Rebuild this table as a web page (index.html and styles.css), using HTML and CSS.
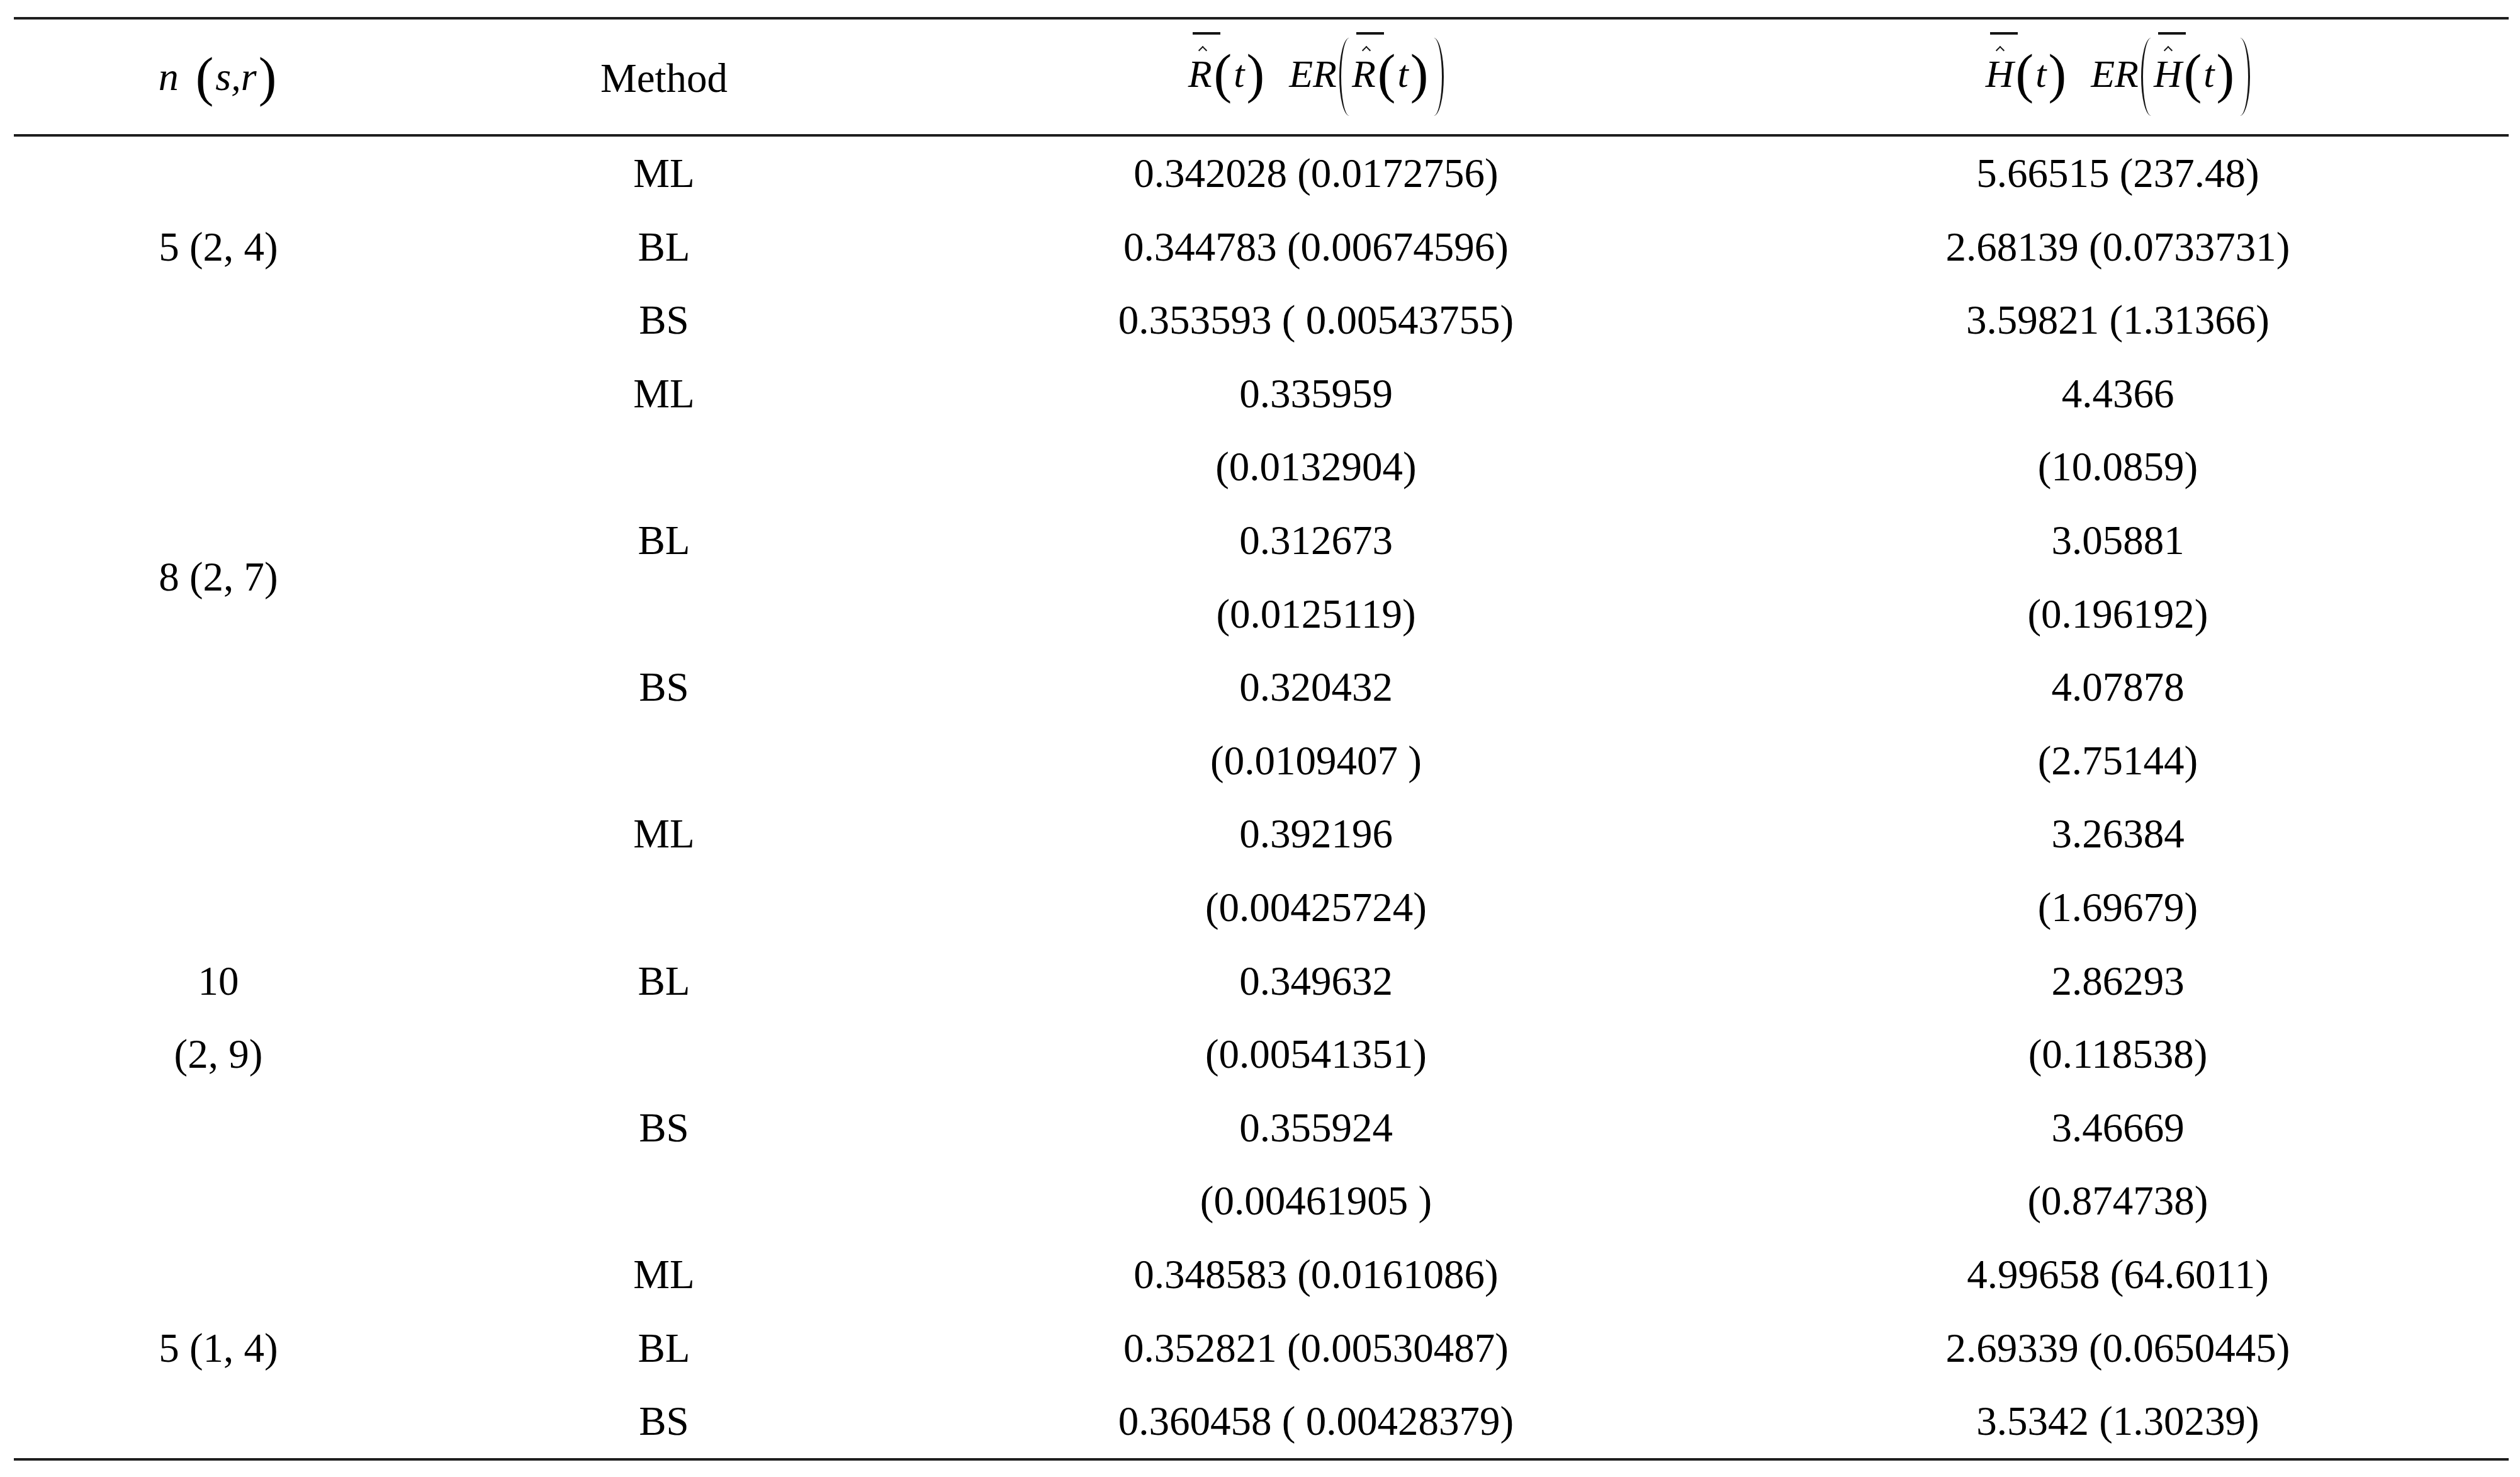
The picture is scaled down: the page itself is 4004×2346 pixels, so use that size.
FILE: index.html
```html
<!DOCTYPE html>
<html>
<head>
<meta charset="utf-8">
<link rel="stylesheet" href="styles.css">
</head>
<body>
<div class="wrap">
<table class="tbl">
<colgroup>
<col class="c1"><col class="c2"><col class="c3"><col class="c4">
</colgroup>
<thead>
<tr>
<th><span class="math"><span class="v">n</span><span class="sp1"></span><span class="p">(</span><span class="v">s</span>,<span class="v">r</span><span class="p">)</span></span></th>
<th class="txt">Method</th>
<th><span class="math"><span class="acc">R</span><span class="p">(</span>t<span class="p">)</span><span class="sp2"></span>ER<span class="bp bl"></span><span class="acc">R</span><span class="p">(</span>t<span class="p">)</span><span class="bp br"></span></span></th>
<th><span class="math"><span class="acc">H</span><span class="p">(</span>t<span class="p">)</span><span class="sp2"></span>ER<span class="bp bl"></span><span class="acc">H</span><span class="p">(</span>t<span class="p">)</span><span class="bp br"></span></span></th>
</tr>
</thead>
<tbody>
<tr><td rowspan="3">5 (2, 4)</td><td>ML</td><td>0.342028 (0.0172756)</td><td>5.66515 (237.48)</td></tr>
<tr><td>BL</td><td>0.344783 (0.00674596)</td><td>2.68139 (0.0733731)</td></tr>
<tr><td>BS</td><td>0.353593 ( 0.00543755)</td><td>3.59821 (1.31366)</td></tr>
<tr><td rowspan="6">8 (2, 7)</td><td>ML</td><td>0.335959</td><td>4.4366</td></tr>
<tr><td></td><td>(0.0132904)</td><td>(10.0859)</td></tr>
<tr><td>BL</td><td>0.312673</td><td>3.05881</td></tr>
<tr><td></td><td>(0.0125119)</td><td>(0.196192)</td></tr>
<tr><td>BS</td><td>0.320432</td><td>4.07878</td></tr>
<tr><td></td><td>(0.0109407 )</td><td>(2.75144)</td></tr>
<tr><td rowspan="6">10<br>(2, 9)</td><td>ML</td><td>0.392196</td><td>3.26384</td></tr>
<tr><td></td><td>(0.00425724)</td><td>(1.69679)</td></tr>
<tr><td>BL</td><td>0.349632</td><td>2.86293</td></tr>
<tr><td></td><td>(0.00541351)</td><td>(0.118538)</td></tr>
<tr><td>BS</td><td>0.355924</td><td>3.46669</td></tr>
<tr><td></td><td>(0.00461905 )</td><td>(0.874738)</td></tr>
<tr><td rowspan="3">5 (1, 4)</td><td>ML</td><td>0.348583 (0.0161086)</td><td>4.99658 (64.6011)</td></tr>
<tr><td>BL</td><td>0.352821 (0.00530487)</td><td>2.69339 (0.0650445)</td></tr>
<tr><td>BS</td><td>0.360458 ( 0.00428379)</td><td>3.5342 (1.30239)</td></tr>
</tbody>
</table>
</div>
</body>
</html>
```

FILE: styles.css
```css
html, body {
  margin: 0;
  padding: 0;
  background: #fff;
}

.wrap {
  margin: 27px 0 0 22px;
  width: 3964px;
  border-top: 4px solid #1e1e1e;
  border-bottom: 4px solid #1e1e1e;
}

.tbl {
  width: 100%;
  border-collapse: separate;
  border-spacing: 0;
  table-layout: fixed;
  font-family: "Liberation Serif", "Times New Roman", serif;
  font-size: 65px;
  color: #000;
}

.c1 { width: 650px; }
.c2 { width: 766px; }
.c3 { width: 1306px; }
.c4 { width: 1242px; }

.tbl th {
  height: 178px;
  padding: 0;
  border-bottom: 4px solid #1e1e1e;
  font-weight: normal;
  text-align: center;
  vertical-align: middle;
  line-height: 1;
}

.tbl th.txt {
  padding-top: 4px;
}

.tbl td {
  height: 116.6px;
  padding: 0;
  line-height: 116.6px;
  text-align: center;
  vertical-align: middle;
  white-space: nowrap;
}

/* header math */
.math {
  font-style: italic;
  font-size: 62px;
  line-height: 1;
  white-space: nowrap;
}

.math .v {
  font-size: 64px;
}

.sp1 { display: inline-block; width: 24px; }
.sp2 { display: inline-block; width: 36px; }

.p {
  font-style: normal;
  font-size: 86px;
  vertical-align: -8px;
  margin: 0 3px;
}

.acc {
  position: relative;
  display: inline-block;
  line-height: 1;
}

.acc::before {
  content: "";
  position: absolute;
  left: 0.12em;
  width: 0.7em;
  top: -0.56em;
  height: 4px;
  background: #151515;
}

.acc::after {
  content: "";
  position: absolute;
  left: 0.3em;
  top: -0.17em;
  width: 8px;
  height: 8px;
  border-top: 2px solid #151515;
  border-left: 2px solid #151515;
  transform: rotate(45deg);
}

.bp {
  display: inline-block;
  width: 32px;
  height: 124px;
  vertical-align: -46px;
  border-radius: 50%;
  box-sizing: border-box;
}

.bl {
  border-left: 3px solid #151515;
  margin-left: 4px;
  margin-right: -12px;
}

.br {
  border-right: 3px solid #151515;
  margin-left: -10px;
}
```
